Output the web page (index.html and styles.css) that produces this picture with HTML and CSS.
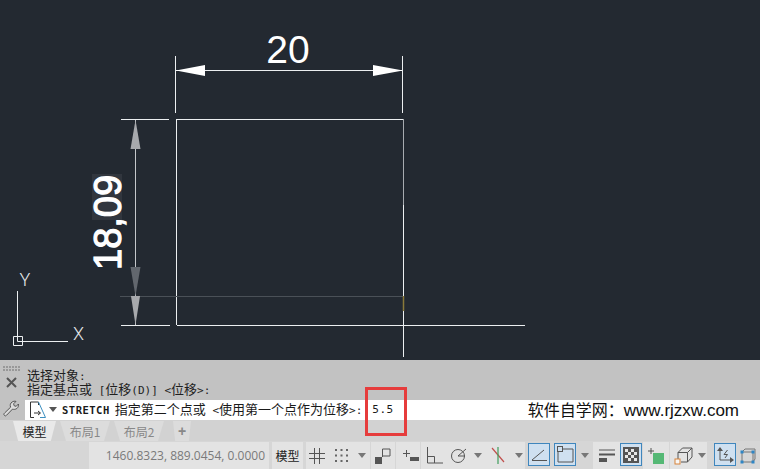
FILE: index.html
```html
<!DOCTYPE html>
<html lang="zh-CN">
<head>
<meta charset="utf-8">
<title>CAD</title>
<link rel="stylesheet" href="styles.css">
</head>
<body>
<div class="app">
  <svg class="canvas" width="760" height="360" viewBox="0 0 760 360">
    <g class="ln">
      <path d="M175.5 56V113M402.500 56V113M176 70.500H403"/>
      <path d="M121 119.500H169M177 119.500H404M121 325.500H170M177 325.500H525M176.500 119V325M403.500 205V357"/>
    </g>
    <path class="ln dim" d="M403.500 119V205"/>
    <path class="ln gr" d="M135.500 120V325"/>
    <path class="ghost" d="M120 296.500H403" />
    <path class="mark" d="M403.500 296V311"/>
    <path class="wh" d="M176 70.500L205 65V76ZM403 70.500L373 65V76Z"/>
    <path class="ar" d="M135.500 120L130.500 149H140.500Z"/>
    <path class="ar2" d="M135.500 296L130.500 267H140.500Z"/>
    <path class="ar" d="M135.500 325L131 296H140Z"/>
    <rect class="smudge" x="92" y="174" width="30" height="46"/>
    <text class="dimt" x="288" y="63" text-anchor="middle">20</text>
    <text class="dimt bold" transform="translate(121 270) rotate(-90)">18,09</text>
    <g class="ln ucs">
      <path d="M17.500 291V341.500H68M13.500 336.500H22.500V345.500H13.500Z"/>
    </g>
    <text class="axis" x="25" y="286" text-anchor="middle">Y</text>
    <text class="axis" x="78.500" y="340" text-anchor="middle">X</text>
  </svg>

  <section class="cmd">
    <div class="cmd-side">
      <svg class="grip" width="18" height="5" viewBox="0 0 18 5"><path d="M0 1H18M0 4H18"/></svg>
      <svg class="close" width="11" height="11" viewBox="0 0 11 11"><path d="M1 1L10 10M10 1L1 10"/></svg>
      <svg class="wrench" width="16" height="17" viewBox="0 0 16 17"><path d="M1.500 15.500C.5 14.500.8 13.700 1.800 12.800L7.600 7.200C6.800 5 7.300 3.300 9 2.100 10.200 1.200 11.600 1 13 1.400L10.600 3.800 11.200 5.800 13.200 6.300 15.400 4C15.800 5.700 15.200 7.400 13.800 8.500 12.400 9.500 10.900 9.600 9.500 9.100L3.600 15.200C2.900 16 2.100 16.200 1.500 15.500Z"/></svg>
    </div>
    <div class="cmd-main">
      <div class="hist">
        <div class="hline">选择对象<span class="lat">:</span></div>
        <div class="hline">指定基点或<span class="lat"> [</span>位移<span class="lat">(D)] &lt;</span>位移<span class="lat">&gt;:</span></div>
      </div>
      <div class="input">
        <svg class="doc" width="18" height="18" viewBox="0 0 18 18"><path class="d1" d="M1.500 1H9.500V4M1.500 1V16.500H5"/><path class="d2" d="M9.500 1L16.500 16.500H11"/><path class="d1" d="M5 12H11M9 10L11.500 12L9 14"/></svg>
        <span class="caret dark"></span>
        <span class="kw">STRETCH</span>
        <span class="prompt">指定第二个点或<span class="lat"> &lt;</span>使用第一个点作为位移<span class="lat">&gt;:</span></span>
        <span class="val">5.5</span>
        <span class="mark-text">软件自学网：<span class="url">www.rjzxw.com</span></span>
      </div>
    </div>
  </section>

  <nav class="tabs">
    <span class="tab on">模型</span>
    <span class="tab">布局1</span>
    <span class="tab">布局2</span>
    <span class="tab plus">+</span>
  </nav>

  <footer class="status">
    <span class="cell coords">1460.8323, 889.0454, 0.0000</span>
    <span class="cell model">模型</span>
    <span class="cell group g1">
      <svg width="16" height="16" viewBox="0 0 16 16"><path class="s" d="M0 5.500H16M0 10.500H16M5.500 0V16M10.500 0V16"/></svg>
      <svg width="15" height="15" viewBox="0 0 15 15"><path class="dots" d="M1 2H3M6.500 2H8.500M12 2H14M1 7.500H3M6.500 7.500H8.500M12 7.500H14M1 13H3M6.500 13H8.500M12 13H14"/></svg>
      <span class="caret"></span>
    </span>
    <span class="cell ic w25">
      <svg width="16" height="16" viewBox="0 0 16 16"><path class="fill" d="M0 9H7V16H0Z"/><path class="s" d="M7.500 9V1H15V8H7.500"/></svg>
    </span>
    <span class="cell ic w25 dyn">
      <svg width="16" height="14" viewBox="0 0 16 14"><path class="s" d="M3.500 1V8M0 4.500H7"/><path class="fill" d="M7 8H16V12H7Z"/></svg>
    </span>
    <span class="cell group g2">
      <svg width="17" height="17" viewBox="0 0 17 17"><path class="s" d="M1.500 0V16H17M1.500 9.500H8.500V16"/></svg>
      <svg width="17" height="17" viewBox="0 0 17 17"><circle class="s" cx="7" cy="9" r="6.500"/><path class="s" d="M7 9L15 2M7 9H14"/></svg>
      <span class="caret c1"></span>
      <svg class="osnap" width="14" height="17" viewBox="0 0 14 17"><path class="rd" d="M1 1L13 15"/><path class="gn" d="M7 0V17"/></svg>
      <span class="caret c2"></span>
    </span>
    <span class="cell sel w22">
      <svg width="16" height="14" viewBox="0 0 16 14"><path class="s" d="M1 12L13 2M1 12.500H16"/></svg>
    </span>
    <span class="cell sel w22 ml">
      <svg width="17" height="17" viewBox="0 0 17 17"><path class="s" d="M1 6V16H16V3H6"/><rect class="s" x=".5" y=".5" width="5" height="5"/></svg>
    </span>
    <span class="cell wcaret"><span class="caret"></span></span>
    <span class="cell ic w30">
      <svg width="16" height="13" viewBox="0 0 16 13"><path class="s" d="M0 1H16"/><path class="thick" d="M0 5.500H16"/><path class="fill" d="M0 9H8V13H0Z"/></svg>
    </span>
    <span class="cell sel w22 tr">
      <svg width="16" height="16" viewBox="0 0 16 16"><rect class="fill" width="16" height="16"/><path class="chk" d="M2 2H5V5H2ZM8 2H11V5H8ZM5 5H8V8H5ZM11 5H14V8H11ZM2 8H5V11H2ZM8 8H11V11H8ZM5 11H8V14H5ZM11 11H14V14H11Z"/></svg>
    </span>
    <span class="cell ic w28">
      <svg width="16" height="16" viewBox="0 0 16 16"><path class="s" d="M3 0V6M0 3H6"/><rect class="green" x="5" y="5" width="11" height="11"/></svg>
    </span>
    <span class="cell group g3">
      <svg width="20" height="18" viewBox="0 0 20 18"><path class="s" d="M4 12V5.500L8.500 1H18V10L13.500 15H7M4 5.500H13.500V15M13.500 5.500L18 1"/><rect class="orange" x="1" y="12" width="5" height="5"/></svg>
      <span class="caret"></span>
    </span>
    <span class="cell sel w22 wide">
      <svg width="17" height="16" viewBox="0 0 17 16"><path class="s" d="M3 1V13H16M10.500 3L7 7.500H10.500L8 11"/><path class="fill" d="M3 0L0 4H6ZM17 13L13 10V16Z"/></svg>
    </span>
    <span class="cell ic w20">
      <svg width="18" height="17" viewBox="0 0 18 17"><path class="s bl" d="M3 5V15H14V5ZM3 5L6 2H16V12L14 15"/><path class="bs" d="M1.500 3.500H4.500V6.500H1.500ZM12.500 3.500H15.500V6.500H12.500ZM1.500 13.500H4.500V16.500H1.500ZM12.500 13.500H15.500V16.500H12.500Z"/></svg>
    </span>
  </footer>
  <div class="redbox"></div>
</div>
</body>
</html>
```

FILE: styles.css
```css
html, body { margin: 0; padding: 0; }
body { background: #d6d6d6; overflow: hidden; }
.app { position: relative; width: 760px; height: 469px; overflow: hidden; font-family: "Noto Sans CJK SC", "Liberation Sans", sans-serif; }

.canvas { display: block; background: #232931; }
.ln { stroke: #eceff1; stroke-width: 1; fill: none; }
.ln.dim { stroke: #a7abb0; }
.ln.gr { stroke: #c4c7ca; }
.ghost { stroke: #4a5057; stroke-width: 1; fill: none; }
.mark { stroke: #8a7a3a; stroke-width: 1.500; fill: none; }
.wh { fill: #fff; }
.ar { fill: #a7a9ad; }
.ar2 { fill: #62676e; }
.smudge { fill: #4c5158; opacity: .35; }
.dimt { font-family: "Liberation Sans", sans-serif; font-size: 39px; fill: #fff; }
.dimt.bold { font-size: 38px; stroke: #fff; stroke-width: 1.200; }
.axis { font-family: "Roboto", "Liberation Sans", sans-serif; font-weight: 300; font-size: 18px; fill: #e6e8ea; }

.cmd { display: flex; height: 60px; background: #c2c2c2; }
.cmd-side { width: 25px; flex: none; display: flex; flex-direction: column; align-items: center; padding-top: 6px; box-sizing: border-box; }
.grip { display: block; margin: 0 0 0 -1px; }
.grip path { stroke: #6e6e6e; stroke-width: 1; stroke-dasharray: 2 1; fill: none; }
.close { display: block; margin: 6px 0 0 -2px; }
.close path { stroke: #555; stroke-width: 2; fill: none; }
.wrench { display: block; margin: 12px 0 0 -3px; }
.wrench path { stroke: #555; stroke-width: 1; fill: #dcdcdc; }
.cmd-main { flex: 1; display: flex; flex-direction: column; min-width: 0; }
.hist { height: 40px; padding: 8px 0 0 2px; box-sizing: border-box; font-size: 13px; color: #1f1f1f; }
.hline { height: 14px; line-height: 14px; white-space: nowrap; }
.lat { font-family: "DejaVu Sans Mono", monospace; font-size: 11px; white-space: pre; }
.input { height: 20px; background: #fff; display: flex; align-items: center; padding-left: 4px; font-size: 13px; line-height: 18px; padding-bottom: 1px; box-sizing: border-box; color: #1a1a1a; white-space: nowrap; }
.doc { flex: none; }
.d1 { stroke: #333; stroke-width: 1; fill: none; }
.d2 { stroke: #3c8fc0; stroke-width: 1; fill: none; }
.caret { display: inline-block; width: 0; height: 0; border-left: 4px solid transparent; border-right: 4px solid transparent; border-top: 5px solid #777; flex: none; }
.caret.dark { margin-left: 2px; border-top-color: #555; }
.kw { margin-left: 5px; font-family: "DejaVu Sans Mono", monospace; font-weight: 700; font-size: 10.500px; letter-spacing: .5px; }
.prompt { margin-left: 5px; }
.val { margin-left: 10px; font-family: "DejaVu Sans Mono", monospace; font-size: 11px; letter-spacing: .5px; }
.mark-text { margin-left: auto; padding-right: 21px; font-size: 16px; color: #111; }
.url { font-family: "Liberation Sans", sans-serif; font-size: 17px; }

.tabs { height: 21px; display: flex; align-items: stretch; padding: 1px 0 0 13px; box-sizing: border-box; background: #d2d2d2; gap: 4px; }
.tab { width: 50px; display: flex; align-items: center; justify-content: center; font-size: 12px; color: #888; background: #dcdcdc; clip-path: polygon(0 0, 100% 0, 88% 100%, 12% 100%); }
.tab.on { width: 43px; color: #222; background: #e9e9e9; }
.tab.plus { width: 18px; margin-left: 5px; font-weight: 700; font-family: "Liberation Sans", sans-serif; font-size: 14px; }

.status { height: 28px; display: flex; align-items: stretch; padding: 1px 0 0 89px; box-sizing: border-box; background: #d6d6d6; gap: 3px; }
.cell { display: flex; align-items: center; justify-content: center; background: #e3e3e3; box-sizing: border-box; flex: none; }
.coords { width: 180px; justify-content: flex-end; padding-right: 4px; font-family: "Open Sans", sans-serif; font-size: 12px; color: #7a7a7a; white-space: nowrap; }
.model { width: 31px; font-size: 12px; color: #222; }
.group { justify-content: flex-start; gap: 10px; }
.g1 { width: 64px; padding-left: 3px; gap: 9px; }
.g2 { width: 104px; gap: 8px; padding-left: 5px; margin-left: -2px; }
.c1 { margin-left: -2px; }
.osnap { margin-left: 1px; }
.c2 { margin-left: 2px; }
.w25 { width: 24px; margin-left: -2px; }
.dyn { padding-left: 5px; }
.w30 { width: 27px; margin-left: -2px; }
.w28 { width: 26px; margin-left: -2px; }
.w20 { width: 22px; margin-left: -2px; background: transparent; }
.g3 { width: 37px; gap: 4px; margin-left: -2px; padding-left: 4px; }
.wcaret { width: 14px; margin-left: -1px; background: transparent; }
.sel { width: 22px; height: 23px; margin-top: 1px; background: #cfe0f0; border: 1px solid #3f86bd; }
.sel.tr { margin-left: -3px; }
.sel.wide { margin-left: 4px; }
.sel.ml { margin-left: 1px; }
.s { stroke: #555; stroke-width: 1; fill: none; }
.s.bl { stroke: #777; }
.dots { stroke: #666; stroke-width: 2; fill: none; }
.fill { fill: #555; }
.thick { stroke: #555; stroke-width: 2; fill: none; }
.chk { fill: #e8e8e8; }
.rd { stroke: #c0504d; stroke-width: 1.200; fill: none; }
.gn { stroke: #3f9d5b; stroke-width: 1.200; fill: none; }
.green { fill: #55b875; }
.orange { fill: #f7f7f7; stroke: #d8833a; stroke-width: 1; }
.bs { fill: #2f86c5; }

.redbox { position: absolute; left: 365px; top: 387px; width: 42px; height: 49px; box-sizing: border-box; border: 3px solid #e63c3c; }
```
